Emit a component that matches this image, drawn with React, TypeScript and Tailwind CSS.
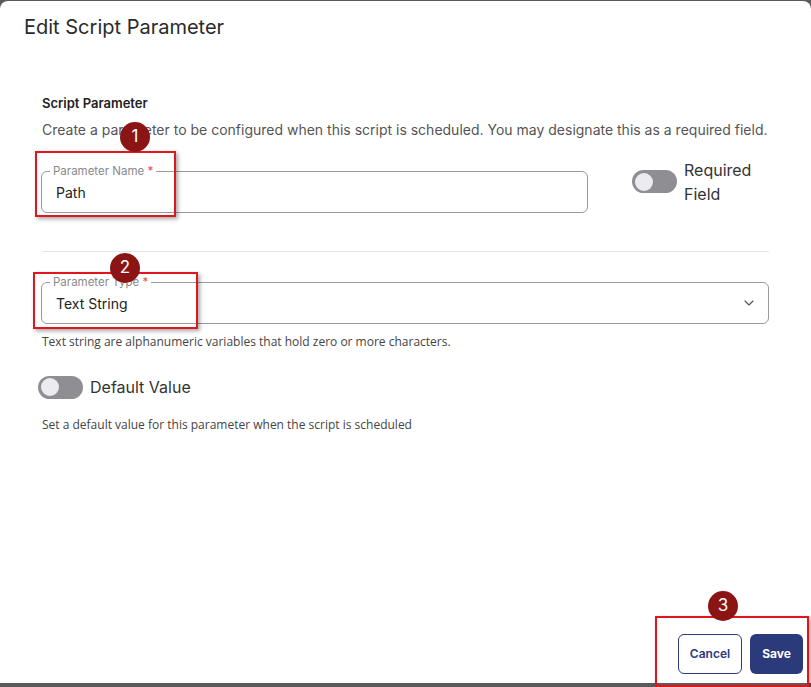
import React from "react";
import { ChevronDown } from "lucide-react";

function Toggle({ className }: { className?: string }) {
  return (
    <div
      className={`flex h-[23px] w-[45px] shrink-0 items-center rounded-full bg-[#8e8e93] px-[3px] ${className ?? ""}`}
    >
      <div className="h-[18px] w-[18px] rounded-full bg-[#ececf0]" />
    </div>
  );
}

function OutlinedField({
  label,
  value,
  select,
  className,
}: {
  label: string;
  value: string;
  select?: boolean;
  className?: string;
}) {
  return (
    <div
      className={`relative flex h-[42px] items-center rounded-md border border-[#9a9a9a] pr-[11px] pl-[14px] ${className ?? ""}`}
    >
      <span className="absolute top-[-7px] left-[8px] bg-white px-[3px] text-[11.5px] leading-[13px] text-[#8a8a8a]">
        {label} <span className="text-[#d9534f]">*</span>
      </span>
      <span className="flex-1 text-[14px] text-[#222]">{value}</span>
      {select && <ChevronDown className="h-4 w-4 text-[#555]" strokeWidth={1.75} />}
    </div>
  );
}

function Marker({ n, className }: { n: number; className: string }) {
  return (
    <div
      className={`absolute flex h-[30px] w-[30px] items-center justify-center rounded-full bg-[#8b1414] text-[17px] text-white ${className}`}
    >
      {n}
    </div>
  );
}

function Frame({ className }: { className: string }) {
  return (
    <div
      className={`absolute border-2 border-[#e0161e] shadow-[2px_2px_4px_rgba(0,0,0,0.35)] ${className}`}
    />
  );
}

export default function App() {
  return (
    <div
      className="relative h-[687px] w-[811px] overflow-hidden bg-[#5a5a5a] pt-px pb-[4px]"
      style={{ fontFamily: "Inter, 'Noto Sans', sans-serif" }}
    >
      <div className="flex h-full flex-col rounded-t-[8px] bg-white">
        <h2 className="pt-[14px] pl-6 text-[20px] leading-[24px] text-[#2a2a2a]">
          Edit Script Parameter
        </h2>

        <div className="flex flex-1 flex-col px-[42px] pt-[56px]">
          <h3 className="text-[13px] leading-[16px] font-semibold text-[#222]">
            Script Parameter
          </h3>
          <p className="mt-[11px] text-[14px] leading-[16px] text-[#555]">
            Create a parameter to be configured when this script is scheduled. You may designate
            this as a required field.
          </p>

          <div className="mt-[33px] flex items-start">
            <OutlinedField label="Parameter Name" value="Path" className="ml-[-1px] w-[547px]" />
            <div className="mt-[-13px] ml-[44px] flex items-start gap-[7px]">
              <Toggle className="mt-[12px]" />
              <span className="text-[16px] leading-[24px] text-[#333]">
                Required
                <br />
                Field
              </span>
            </div>
          </div>

          <div className="mt-[38px] h-px w-full bg-[#e6e6e6]" />

          <OutlinedField
            label="Parameter Type"
            value="Text String"
            select
            className="mt-[30px] ml-[-1px]"
          />
          <p
            className="mt-[10px] text-[12px] leading-[15px] text-[#444]"
            style={{ fontFamily: "'Open Sans', sans-serif" }}
          >
            Text string are alphanumeric variables that hold zero or more characters.
          </p>

          <div className="mt-[26px] ml-[-4px] flex items-center gap-[7px]">
            <Toggle />
            <span className="text-[16px] text-[#333]">Default Value</span>
          </div>
          <p
            className="mt-[18px] text-[12px] leading-[15px] text-[#444]"
            style={{ fontFamily: "'Open Sans', sans-serif" }}
          >
            Set a default value for this parameter when the script is scheduled
          </p>

          <div className="mt-auto mr-[-34px] mb-[9px] flex justify-end gap-2">
            <button className="h-[40px] w-[64px] rounded-md border border-[#2d3a7c] bg-white text-[12px] font-semibold text-[#2d3a7c]">
              Cancel
            </button>
            <button className="h-[40px] w-[53px] rounded-md bg-[#2b3a7b] text-[12px] font-bold text-white">
              Save
            </button>
          </div>
        </div>
      </div>

      <Frame className="top-[151px] left-[35px] h-[66px] w-[141px]" />
      <Frame className="top-[272px] left-[33px] h-[57px] w-[165px]" />
      <Frame className="top-[616px] left-[655px] h-[71px] w-[154px]" />
      <Marker n={1} className="top-[122px] left-[120px]" />
      <Marker n={2} className="top-[253px] left-[110px]" />
      <Marker n={3} className="top-[591px] left-[708px]" />
    </div>
  );
}
